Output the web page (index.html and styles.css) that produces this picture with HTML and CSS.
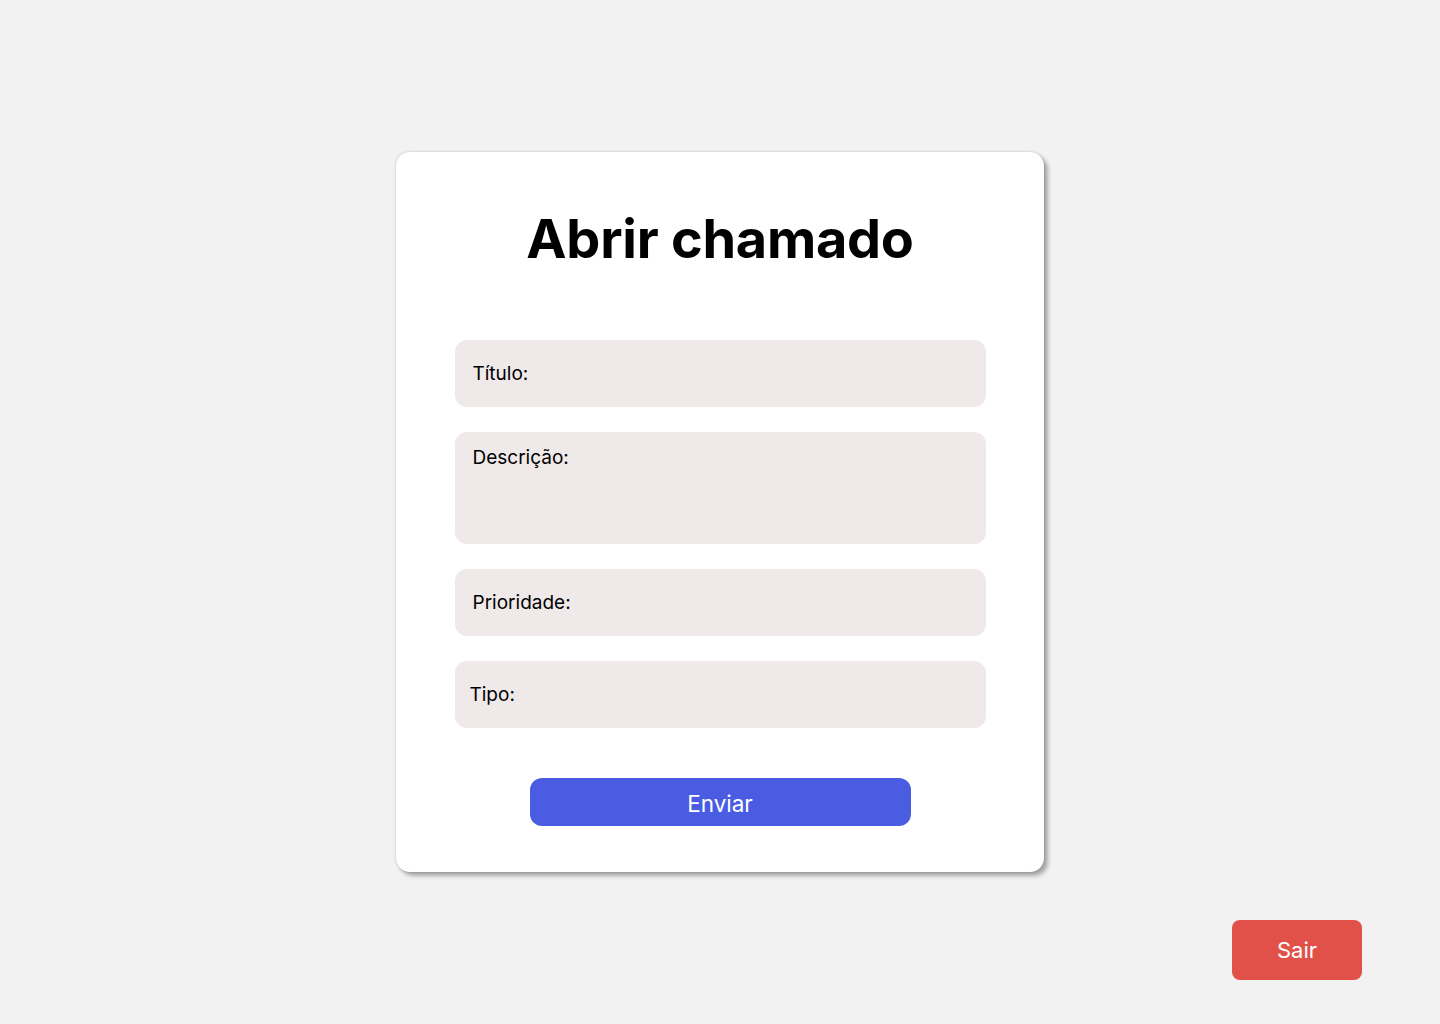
FILE: index.html
```html
<!DOCTYPE html>
<html lang="pt">
<head>
<meta charset="utf-8">
<title>Abrir chamado</title>
<link rel="stylesheet" href="styles.css">
</head>
<body>
<main class="page">
  <section class="card">
    <h1 class="title">Abrir chamado</h1>
    <form class="form">
      <div class="field">Título:</div>
      <div class="field field-tall">Descrição:</div>
      <div class="field">Prioridade:</div>
      <div class="field field-tipo">Tipo:</div>
      <button type="button" class="btn-send">Enviar</button>
    </form>
  </section>
  <div class="footer">
    <button type="button" class="btn-exit">Sair</button>
  </div>
</main>
</body>
</html>
```
FILE: styles.css
```css
* { box-sizing: border-box; }
html, body { margin: 0; padding: 0; }
body {
  background: #f2f2f2;
  font-family: Inter, "Noto Sans", sans-serif;
  width: 1440px;
  height: 1024px;
  overflow: hidden;
}
.page {
  display: flex;
  flex-direction: column;
  align-items: center;
  padding-top: 152px;
}
.card {
  width: 648px;
  height: 720px;
  background: #ffffff;
  border-radius: 14px;
  box-shadow: 0 0 3px rgba(0,0,0,0.22), 4px 4px 4px rgba(0,0,0,0.3);
  display: flex;
  flex-direction: column;
  align-items: center;
  padding-top: 56px;
}
.title {
  margin: 0;
  font-size: 54px;
  font-weight: 700;
  color: #000;
  line-height: 62px;
  letter-spacing: -0.25px;
}
.form {
  margin-top: 70px;
  width: 531px;
  display: flex;
  flex-direction: column;
  gap: 25px;
  align-items: center;
}
.field {
  width: 100%;
  height: 67px;
  background: #efe9e9;
  border-radius: 12px;
  display: flex;
  align-items: center;
  padding-left: 18px;
  font-size: 19px;
  color: #000;
}
.field-tall {
  height: 112px;
  align-items: flex-start;
  padding-top: 14px;
}
.field-tipo { padding-left: 15px; }
.btn-send {
  margin-top: 25px;
  width: 381px;
  height: 48px;
  border: none;
  border-radius: 12px;
  background: #4a5de2;
  color: #fff;
  font-family: Inter, "Noto Sans", sans-serif;
  font-size: 22.5px;
  font-weight: 400;
  padding: 2px 0 0 0;
}
.footer {
  width: 100%;
  display: flex;
  justify-content: flex-end;
  padding-right: 78px;
  margin-top: 48px;
}
.btn-exit {
  width: 130px;
  height: 60px;
  border: none;
  border-radius: 8px;
  background: #e2504a;
  color: #fff;
  font-family: Inter, "Noto Sans", sans-serif;
  font-size: 22px;
  padding: 0;
}
```
